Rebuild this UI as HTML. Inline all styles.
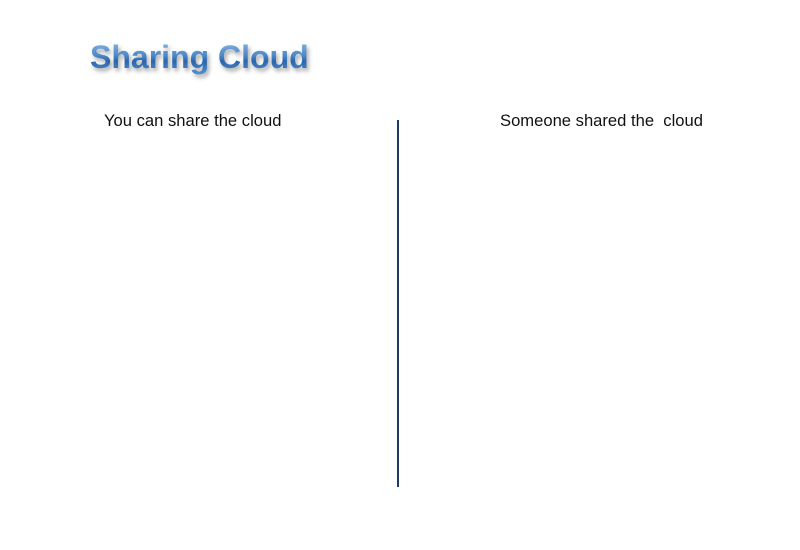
<!DOCTYPE html>
<html><head><meta charset="utf-8"><style>
html,body{margin:0;padding:0;background:#fff;width:800px;height:550px;overflow:hidden;position:relative}
.t{position:absolute;left:90px;top:39px;font:bold 32px "Liberation Sans",sans-serif;letter-spacing:0;
background:linear-gradient(#8fbce6 0%,#4a88c8 45%,#2a66ad 60%,#5a97d2 100%);-webkit-background-clip:text;background-clip:text;color:transparent;
filter:drop-shadow(2px 3px 2px rgba(60,60,60,.45))}
.l{position:absolute;top:111px;font:16.6px "Liberation Sans",sans-serif;color:#111;white-space:pre}
.v{position:absolute;left:397px;top:120px;width:2px;height:367px;background:#1f3a5f}
</style></head><body>
<div class="t">Sharing Cloud</div>
<div class="l" style="left:104px">You can share the cloud</div>
<div class="l" style="left:500px">Someone shared the  cloud</div>
<div class="v"></div>
</body></html>
